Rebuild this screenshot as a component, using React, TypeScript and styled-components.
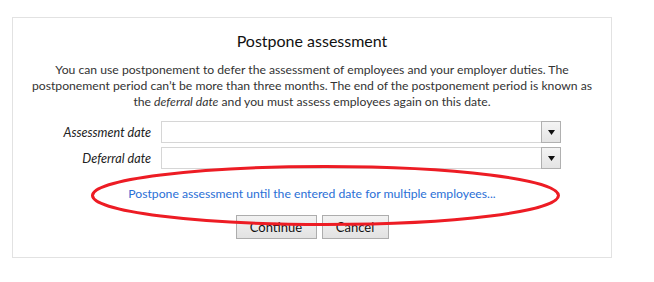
import * as React from "react";
import styled, { createGlobalStyle } from "styled-components";

const GlobalStyle = createGlobalStyle`
  html, body {
    margin: 0;
    padding: 0;
    background: #ffffff;
  }
  body {
    font-family: "Segoe UI", Lato, "Open Sans", sans-serif;
    color: #333333;
  }
`;

const Page = styled("div")({
  position: "relative",
  width: 654,
  height: 282,
  paddingTop: 17,
  paddingLeft: 12,
  boxSizing: "border-box",
});

const Card = styled("div")({
  width: 600,
  height: 241,
  boxSizing: "border-box",
  border: "1px solid #e2e2e2",
  display: "flex",
  flexDirection: "column",
  alignItems: "center",
});

const Title = styled("h2")({
  margin: 0,
  marginTop: 13,
  fontSize: 16,
  lineHeight: "20px",
  fontWeight: 400,
  color: "#111111",
});

const Intro = styled("p")({
  margin: 0,
  marginTop: 11,
  width: 580,
  textAlign: "center",
  fontSize: 12.2,
  lineHeight: "16px",
  color: "#333333",
});

const Form = styled("div")({
  alignSelf: "stretch",
  display: "grid",
  gridTemplateColumns: "138px 400px",
  columnGap: 10,
  rowGap: 4,
  alignItems: "center",
  marginTop: 11,
});

const Label = styled("label")({
  textAlign: "right",
  fontStyle: "italic",
  fontSize: 12.6,
  color: "#222222",
});

const Select = styled("div")({
  display: "flex",
  height: 22,
  boxSizing: "border-box",
  border: "1px solid #d6d6d6",
  background: "#ffffff",
});

const SelectValue = styled("div")({
  flex: 1,
});

const DropButton = styled("div")({
  width: 20,
  margin: -1,
  boxSizing: "border-box",
  border: "1px solid #b0b0b0",
  background: "linear-gradient(#f4f4f4, #e4e4e4)",
  display: "flex",
  alignItems: "center",
  justifyContent: "center",
});

const MultiLink = styled("a")({
  marginTop: 16,
  fontSize: 12.2,
  lineHeight: "18px",
  color: "#2a6fd6",
  textDecoration: "none",
  cursor: "pointer",
});

const Buttons = styled("div")({
  display: "flex",
  gap: 5,
  marginTop: 12,
});

const Button = styled("button")<{ $width: number }>(({ $width }) => ({
  width: $width,
  height: 24,
  boxSizing: "border-box",
  border: "1px solid #adadad",
  background: "linear-gradient(#f2f2f2, #e2e2e2)",
  fontFamily: "inherit",
  fontSize: 13,
  color: "#111111",
  padding: 0,
}));

const Annotation = styled("svg")({
  position: "absolute",
  left: 0,
  top: 0,
  pointerEvents: "none",
});

function DateSelect() {
  return (
    <Select>
      <SelectValue />
      <DropButton>
        <svg width={7} height={5} viewBox="0 0 7 5">
          <path d="M0 0 H7 L3.5 5 Z" fill="#111111" />
        </svg>
      </DropButton>
    </Select>
  );
}

export default function App() {
  return (
    <>
      <GlobalStyle />
      <Page>
        <Card>
          <Title>Postpone assessment</Title>
          <Intro>
            You can use postponement to defer the assessment of employees and
            your employer duties. The
            <br />
            postponement period can’t be more than three months. The end of
            the postponement period is known as
            <br />
            the <i>deferral date</i> and you must assess employees again on
            this date.
          </Intro>
          <Form>
            <Label>Assessment date</Label>
            <DateSelect />
            <Label>Deferral date</Label>
            <DateSelect />
          </Form>
          <MultiLink>
            Postpone assessment until the entered date for multiple employees...
          </MultiLink>
          <Buttons>
            <Button $width={81}>Continue</Button>
            <Button $width={67}>Cancel</Button>
          </Buttons>
        </Card>
        <Annotation width={654} height={282} viewBox="0 0 654 282">
          <ellipse
            cx={325.5}
            cy={195.5}
            rx={233}
            ry={29}
            fill="none"
            stroke="#ed1c24"
            strokeWidth={3}
          />
        </Annotation>
      </Page>
    </>
  );
}
